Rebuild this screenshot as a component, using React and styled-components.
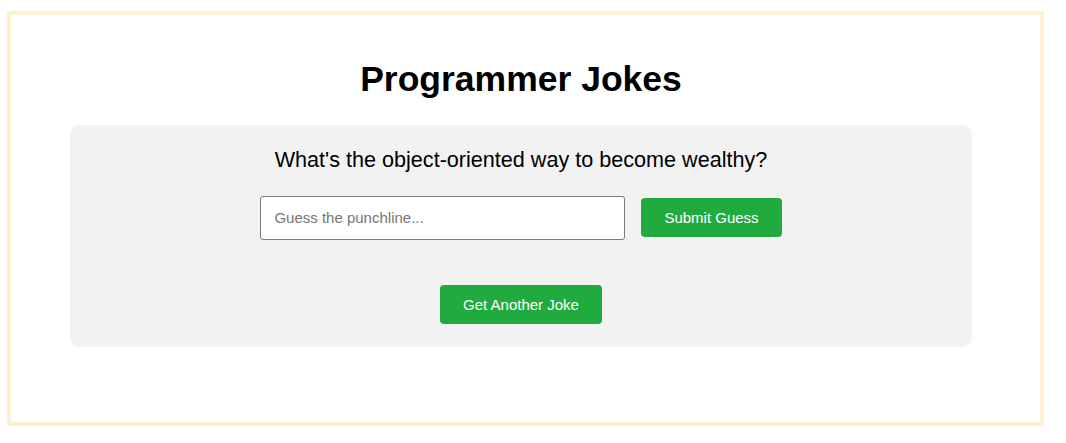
import React, { useState } from 'react'
import styled, { createGlobalStyle } from 'styled-components'

const GlobalStyle = createGlobalStyle`
  html, body {
    margin: 0;
    padding: 0;
    background: #ffffff;
  }
  body {
    font-family: "Liberation Sans", Arial, Helvetica, sans-serif;
    color: #000000;
  }
`

const Frame = styled.div`
  box-sizing: border-box;
  width: 1037px;
  margin: 11px 0 0 7px;
  border: 4px solid #fdf1d4;
  padding: 44px 68px 75px 59px;
`

const Title = styled.h1`
  margin: 0 0 26px;
  font-size: 35.5px;
  line-height: 40px;
  font-weight: 700;
  text-align: center;
`

const Card = styled.div`
  display: flex;
  flex-direction: column;
  align-items: center;
  background: #f2f2f2;
  border-radius: 10px;
  padding: 22px 20px 23px;
`

const Question = styled.p`
  margin: 0 0 23.5px;
  font-size: 21.6px;
  line-height: 25px;
  text-align: center;
`

const GuessRow = styled.form`
  display: flex;
  align-items: center;
  gap: 16px;
  margin: 0;
`

const GuessInput = styled.input`
  box-sizing: border-box;
  width: 365px;
  height: 44px;
  padding: 0 13px;
  border: 1px solid #7b7b7b;
  border-radius: 3px;
  background: #ffffff;
  font-family: inherit;
  font-size: 15px;
  color: #222222;
  outline: none;

  &::placeholder {
    color: #767676;
  }
`

const Button = styled.button`
  box-sizing: border-box;
  height: 39px;
  padding: 0 23px;
  margin-top: ${props => props.$spaced ? '45.5px' : '0'};
  border: none;
  border-radius: 4px;
  background: #21ab3f;
  color: #ffffff;
  font-family: inherit;
  font-size: 15px;
  line-height: 17px;
  cursor: pointer;
`

export default function App () {
  const [guess, setGuess] = useState('')

  return (
    <>
      <GlobalStyle />
      <Frame>
        <Title>Programmer Jokes</Title>
        <Card>
          <Question>What's the object-oriented way to become wealthy?</Question>
          <GuessRow onSubmit={e => e.preventDefault()}>
            <GuessInput
              type='text'
              placeholder='Guess the punchline...'
              value={guess}
              onChange={e => setGuess(e.target.value)}
            />
            <Button type='submit'>Submit Guess</Button>
          </GuessRow>
          <Button type='button' $spaced>Get Another Joke</Button>
        </Card>
      </Frame>
    </>
  )
}
